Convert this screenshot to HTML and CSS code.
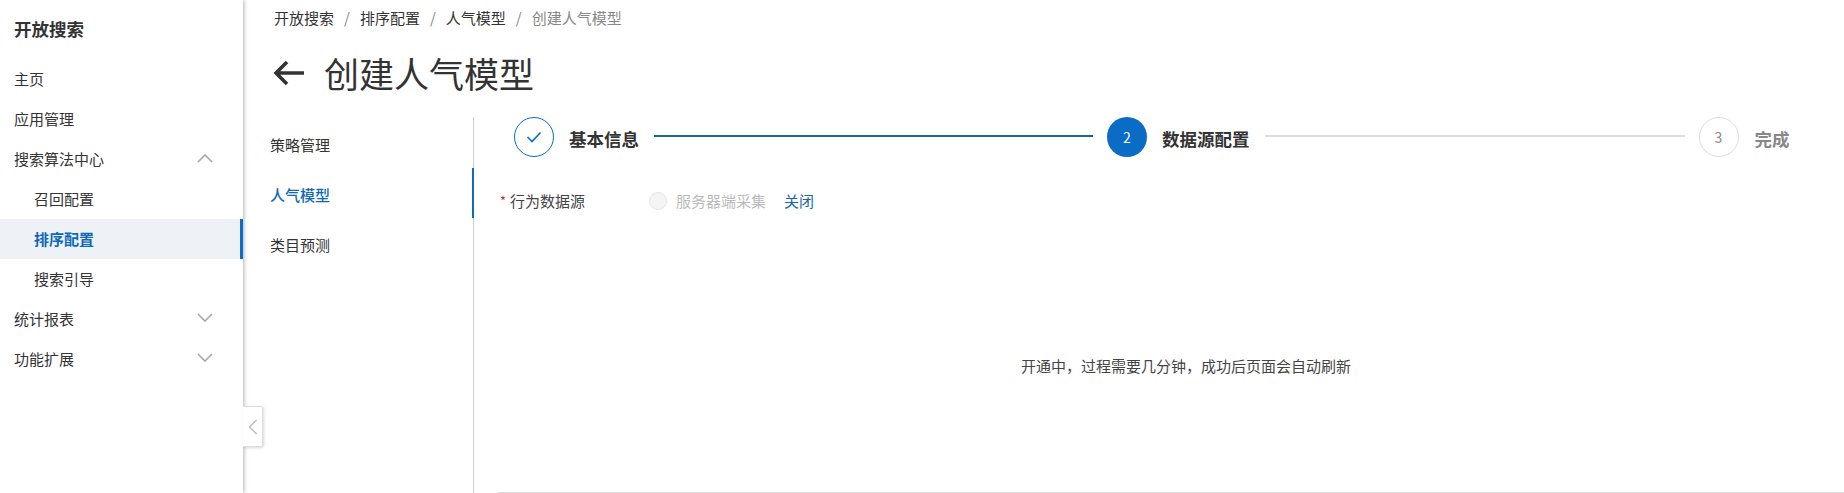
FILE: index.html
```html
<!DOCTYPE html>
<html lang="zh-CN">
<head>
  <meta charset="UTF-8">
  <title>创建人气模型</title>
  <link rel="stylesheet" href="styles.css">
</head>
<body>

<!-- SIDEBAR -->
<aside class="sidebar">
  <div class="sidebar-title">开放搜索</div>
  <div class="nav-item">主页</div>
  <div class="nav-item">应用管理</div>
  <div class="nav-item">搜索算法中心
    <svg class="chevron" viewBox="0 0 16 10"><path d="M1 9l7-7 7 7"/></svg>
  </div>
  <div class="nav-item nav-sub">召回配置</div>
  <div class="nav-item nav-sub nav-active">排序配置</div>
  <div class="nav-item nav-sub">搜索引导</div>
  <div class="nav-item">统计报表
    <svg class="chevron" viewBox="0 0 16 10"><path d="M1 1l7 7 7-7"/></svg>
  </div>
  <div class="nav-item">功能扩展
    <svg class="chevron" viewBox="0 0 16 10"><path d="M1 1l7 7 7-7"/></svg>
  </div>
  <div class="collapse-btn">
    <svg viewBox="0 0 10 18"><path d="M9 1L1 9l8 8"/></svg>
  </div>
</aside>

<!-- MAIN -->
<main class="main">
  <div class="breadcrumb">
    <span>开放搜索</span><i>/</i><span>排序配置</span><i>/</i><span>人气模型</span><i>/</i><span class="crumb-current">创建人气模型</span>
  </div>
  <div class="page-head">
    <svg class="back-arrow" viewBox="0 0 32 26"><path d="M31 13H3M14 2L3 13l11 11"/></svg>
    <h1>创建人气模型</h1>
  </div>

  <div class="content">
    <div class="subnav">
      <div class="subnav-item">策略管理</div>
      <div class="subnav-item subnav-active">人气模型</div>
      <div class="subnav-item">类目预测</div>
    </div>

    <div class="panel">
      <div class="steps">
        <div class="step-dot step-done">
          <svg viewBox="0 0 16 12"><path d="M1.5 6l4.5 4.5L14.5 1.5"/></svg>
        </div>
        <div class="step-name">基本信息</div>
        <div class="step-line line-done"></div>
        <div class="step-dot step-now">2</div>
        <div class="step-name">数据源配置</div>
        <div class="step-line line-todo"></div>
        <div class="step-dot step-todo">3</div>
        <div class="step-name name-todo">完成</div>
      </div>

      <div class="form-row">
        <span class="required">*</span>
        <span class="form-label">行为数据源</span>
        <span class="radio"></span>
        <span class="radio-text">服务器端采集</span>
        <span class="link">关闭</span>
      </div>

      <div class="wait-box">开通中，过程需要几分钟，成功后页面会自动刷新</div>
    </div>
  </div>
</main>

</body>
</html>
```

FILE: styles.css
```css
* { box-sizing: border-box; }
html, body { height: 100%; }
body {
  margin: 0; display: flex; height: 493px; overflow: hidden;
  background: white; color: #333;
  font-family: "Noto Sans CJK SC", "Noto Sans", sans-serif; font-size: 15px;
}

.sidebar {
  position: relative; flex: none;
  width: 243px; height: 100%;
  background: white;
  box-shadow: 1px 0 4px rgba(0, 0, 0, 0.3);
}
.sidebar-title { height: 59px; padding: 16px 14px 0; font-size: 17.5px; line-height: 26px; font-weight: 700; }
.nav-item {
  display: flex; justify-content: space-between; align-items: center;
  height: 40px; padding: 0 30px 2px 14px;
}
.nav-sub { padding-left: 34px; }
.nav-active {
  background: #eef1f6; color: #0d68b8; font-weight: 700;
  border-right: 3px solid #0a6cc4;
}
.chevron { width: 16px; height: 10px; }
.chevron path { fill: none; stroke: #aaa; stroke-width: 1.6; }

.collapse-btn {
  position: absolute; left: 243px; top: 406px;
  display: flex; align-items: center; justify-content: center;
  width: 20px; height: 41px;
  background: white; border: 1px solid #ddd; border-left: none;
  border-radius: 0 2px 2px 0;
  box-shadow: 1px 1px 3px rgba(0, 0, 0, 0.15);
}
.collapse-btn svg { width: 10px; height: 16px; }
.collapse-btn path { fill: none; stroke: #bbb; stroke-width: 1.6; }

.main { flex: 1; min-width: 0; display: flex; flex-direction: column; }

.breadcrumb { display: flex; align-items: center; height: 36px; padding: 0 0 2px 31px; }
.breadcrumb i { margin: 0 10px; font-style: normal; color: #888; }
.crumb-current { color: #888; }

.page-head { display: flex; align-items: center; height: 81px; padding: 0 0 7px 30px; }
.back-arrow { width: 32px; height: 26px; margin-right: 19px; }
.back-arrow path { fill: none; stroke: #333; stroke-width: 3.6; }
h1 { margin: 0; font-size: 35px; line-height: 46px; font-weight: 400; }

.content { flex: 1; display: flex; min-height: 0; }

.subnav { flex: none; width: 231px; padding-top: 1px; border-right: 1px solid #ccc; }
.subnav-item { display: flex; align-items: center; height: 50px; margin-right: -1px; padding: 2px 0 0 27px; }
.subnav-active { color: #0d68b8; font-weight: 500; box-shadow: inset -2px 0 0 #0a6cc4; }

.panel { flex: 1; min-width: 0; display: flex; flex-direction: column; padding-left: 24px; }

.steps { display: flex; align-items: flex-start; height: 40px; padding-left: 16px; }
.step-dot {
  flex: none; display: flex; align-items: center; justify-content: center;
  width: 40px; height: 40px; border-radius: 50%; font-size: 14px;
}
.step-done { border: 1px solid #0a6cc4; }
.step-done svg { width: 16px; height: 12px; }
.step-done path { fill: none; stroke: #0a6cc4; stroke-width: 1.6; }
.step-now { background: #0a6cc4; color: white; }
.step-todo { border: 1px solid #ddd; color: #888; }
.step-name { flex: none; margin: 9px 15px 0 15px; font-size: 17.5px; line-height: 26px; font-weight: 700; }
.name-todo { margin: 9px 0 0 16px; color: #888; }
.step-line { flex: none; height: 2px; margin: 18px 14px 0 0; background: #ddd; }
.line-done { width: 439px; background: #1c659f; }
.line-todo { width: 420px; }

.form-row { display: flex; align-items: center; height: 30px; margin-top: 28px; padding-left: 2px; }
.required { width: 10px; color: #c0392b; font-size: 13px; }
.form-label { width: 139px; padding-top: 1px; color: #444; }
.radio {
  width: 18px; height: 18px; margin: 2px 9px 0 0;
  background: #f4f4f4; border: 1px solid #e6e6e6; border-radius: 50%;
}
.radio-text { margin-right: 18px; color: #bbb; }
.link { color: #1b66a8; }

.wait-box {
  flex: 1; display: flex; align-items: center; justify-content: center;
  padding: 24px 0 0 30px; border-bottom: 1px solid #ddd; color: #444;
}
```
